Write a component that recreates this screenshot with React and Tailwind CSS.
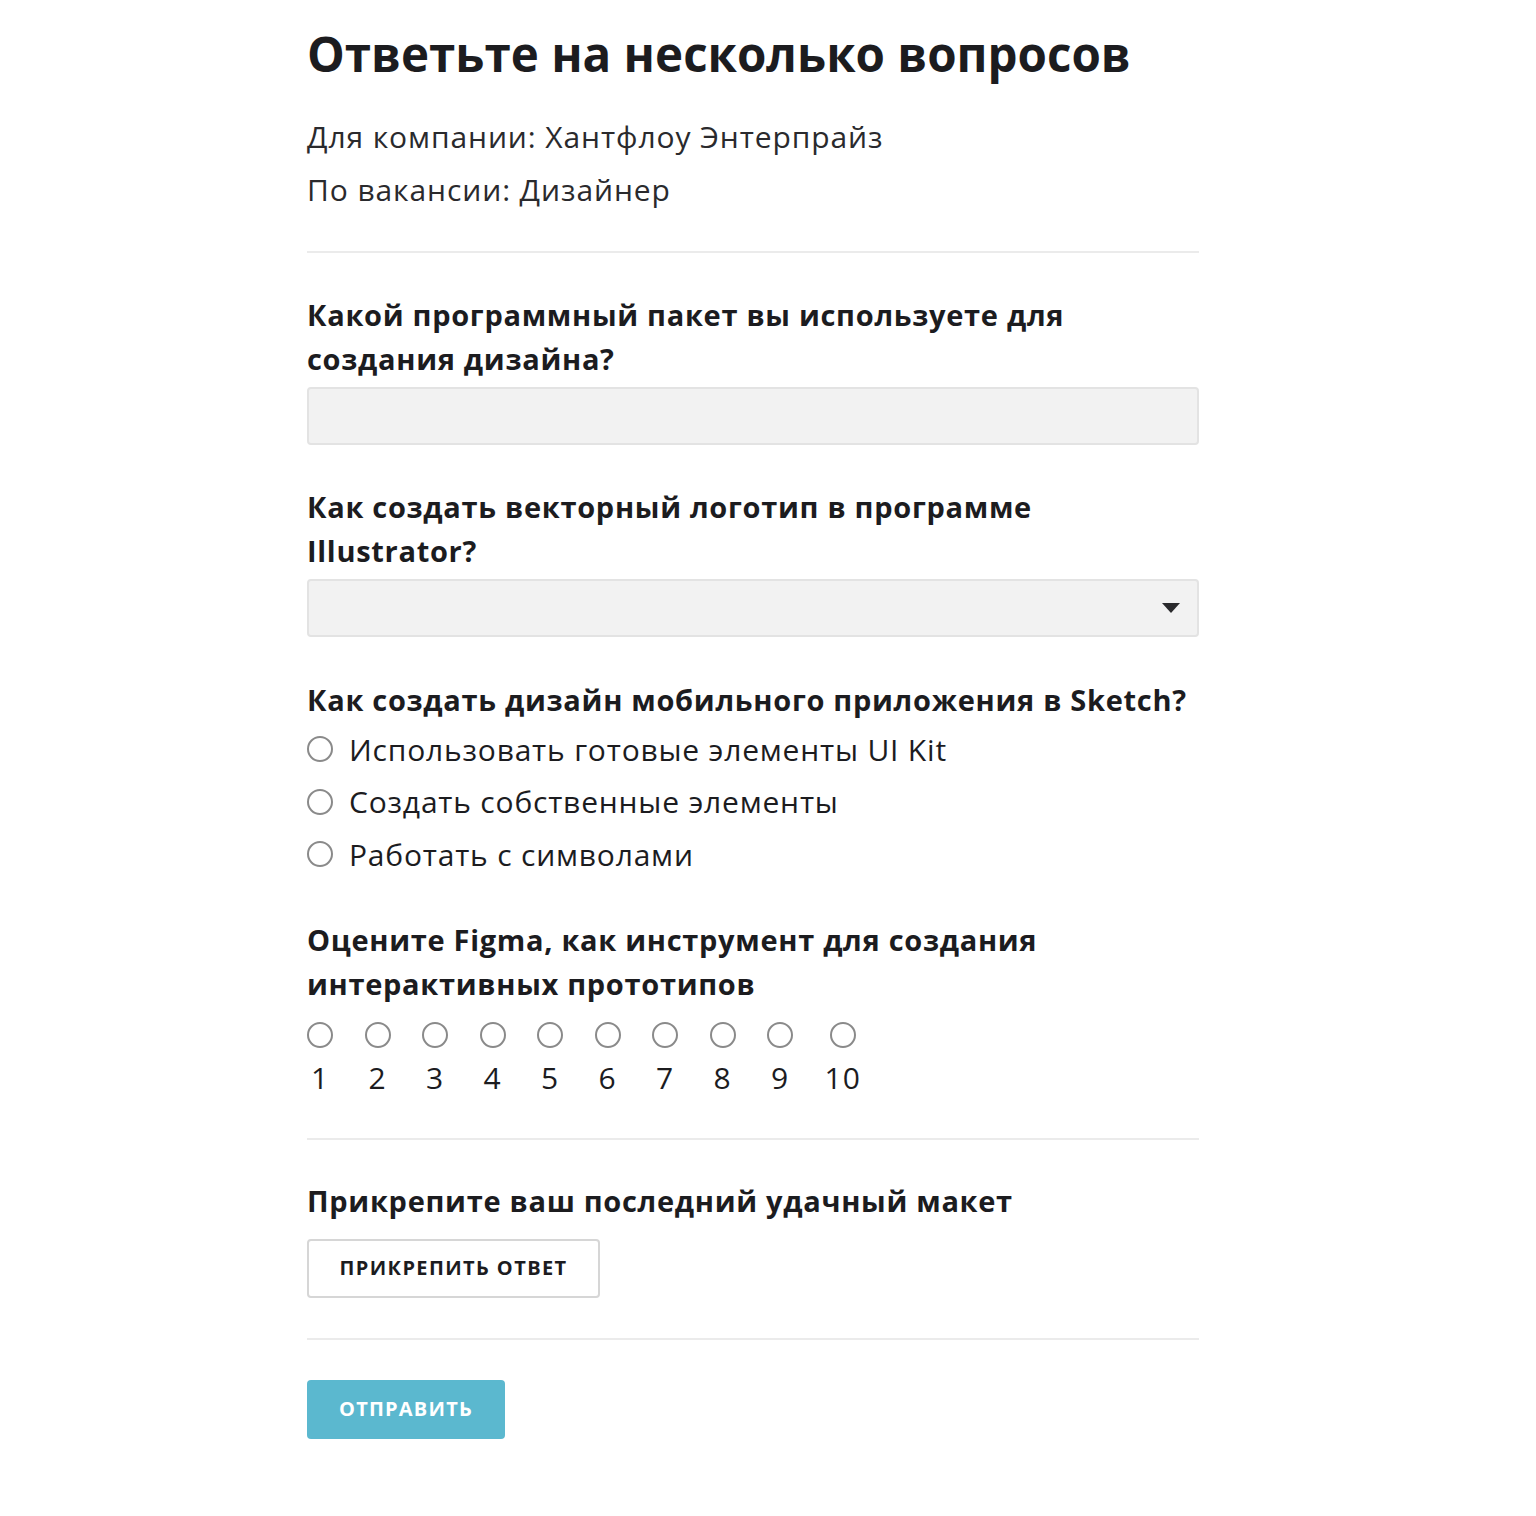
const options = [
  "Использовать готовые элементы UI Kit",
  "Создать собственные элементы",
  "Работать с символами",
];

const scale = [1, 2, 3, 4, 5, 6, 7, 8, 9, 10];

function Radio() {
  return (
    <span className="inline-block w-[26px] h-[26px] rounded-full border-2 border-[#8a8a8a] bg-white shrink-0" />
  );
}

function Question({ children }) {
  return (
    <h3 className="text-[29px] leading-[44px] font-bold tracking-[0.7px] text-[#1c1c1f]">
      {children}
    </h3>
  );
}

export default function App() {
  return (
    <div
      className="min-h-[1516px] bg-white text-[#1c1c1f]"
      style={{ fontFamily: "'Open Sans', Lato, sans-serif" }}
    >
      <div className="w-[892px] ml-[307px] pt-[22px]">
        <h1 className="text-[47.5px] leading-[64px] font-bold">
          Ответьте на несколько вопросов
        </h1>
        <div className="mt-[24px] text-[30px] leading-[53px] tracking-[0.9px] text-[#2a2a2d]">
          <p>Для компании: Хантфлоу Энтерпрайз</p>
          <p>По вакансии: Дизайнер</p>
        </div>

        <div className="mt-[35px] h-[2px] bg-[#ebebeb]" />

        <div className="mt-[40px]">
          <Question>
            Какой программный пакет вы используете для
            <br />
            создания дизайна?
          </Question>
          <input
            className="mt-[6px] block w-full h-[58px] rounded-[4px] border-2 border-[#e3e3e3] bg-[#f2f2f2] outline-none"
            type="text"
          />
        </div>

        <div className="mt-[40px]">
          <Question>
            Как создать векторный логотип в программе
            <br />
            Illustrator?
          </Question>
          <div className="mt-[6px] flex items-center justify-end h-[58px] rounded-[4px] border-2 border-[#e3e3e3] bg-[#f2f2f2] pr-[16px]">
            <svg width="20" height="12" viewBox="0 0 20 12">
              <path d="M1 1h18L10 11z" fill="#2a2a2d" />
            </svg>
          </div>
        </div>

        <div className="mt-[41px]">
          <Question>Как создать дизайн мобильного приложения в Sketch?</Question>
          <div className="mt-[1px] flex flex-col">
            {options.map((o) => (
              <label key={o} className="flex items-center gap-[16px] h-[52.5px] text-[30px] tracking-[0.8px]">
                <Radio />
                <span>{o}</span>
              </label>
            ))}
          </div>
        </div>

        <div className="mt-[37px]">
          <Question>
            Оцените Figma, как инструмент для создания
            <br />
            интерактивных прототипов
          </Question>
          <div className="mt-[16px] flex gap-[31.5px]">
            {scale.map((n) => (
              <label key={n} className="flex flex-col items-center min-w-[26px]">
                <Radio />
                <span className="mt-[12px] text-[30px] leading-[36px] tracking-[1px]">{n}</span>
              </label>
            ))}
          </div>
        </div>

        <div className="mt-[42px] h-[2px] bg-[#ebebeb]" />

        <div className="mt-[39px]">
          <Question>Прикрепите ваш последний удачный макет</Question>
          <button className="mt-[16px] h-[59px] w-[293px] rounded-[4px] border-2 border-[#d6d6d6] bg-white text-[20px] font-bold tracking-[1.4px] text-[#1c1c1f]">
            ПРИКРЕПИТЬ ОТВЕТ
          </button>
        </div>

        <div className="mt-[40px] h-[2px] bg-[#ebebeb]" />

        <button className="mt-[40px] h-[59px] w-[198px] rounded-[4px] bg-[#5bb8cf] text-[20px] font-bold tracking-[1.2px] text-white">
          ОТПРАВИТЬ
        </button>
      </div>
    </div>
  );
}
